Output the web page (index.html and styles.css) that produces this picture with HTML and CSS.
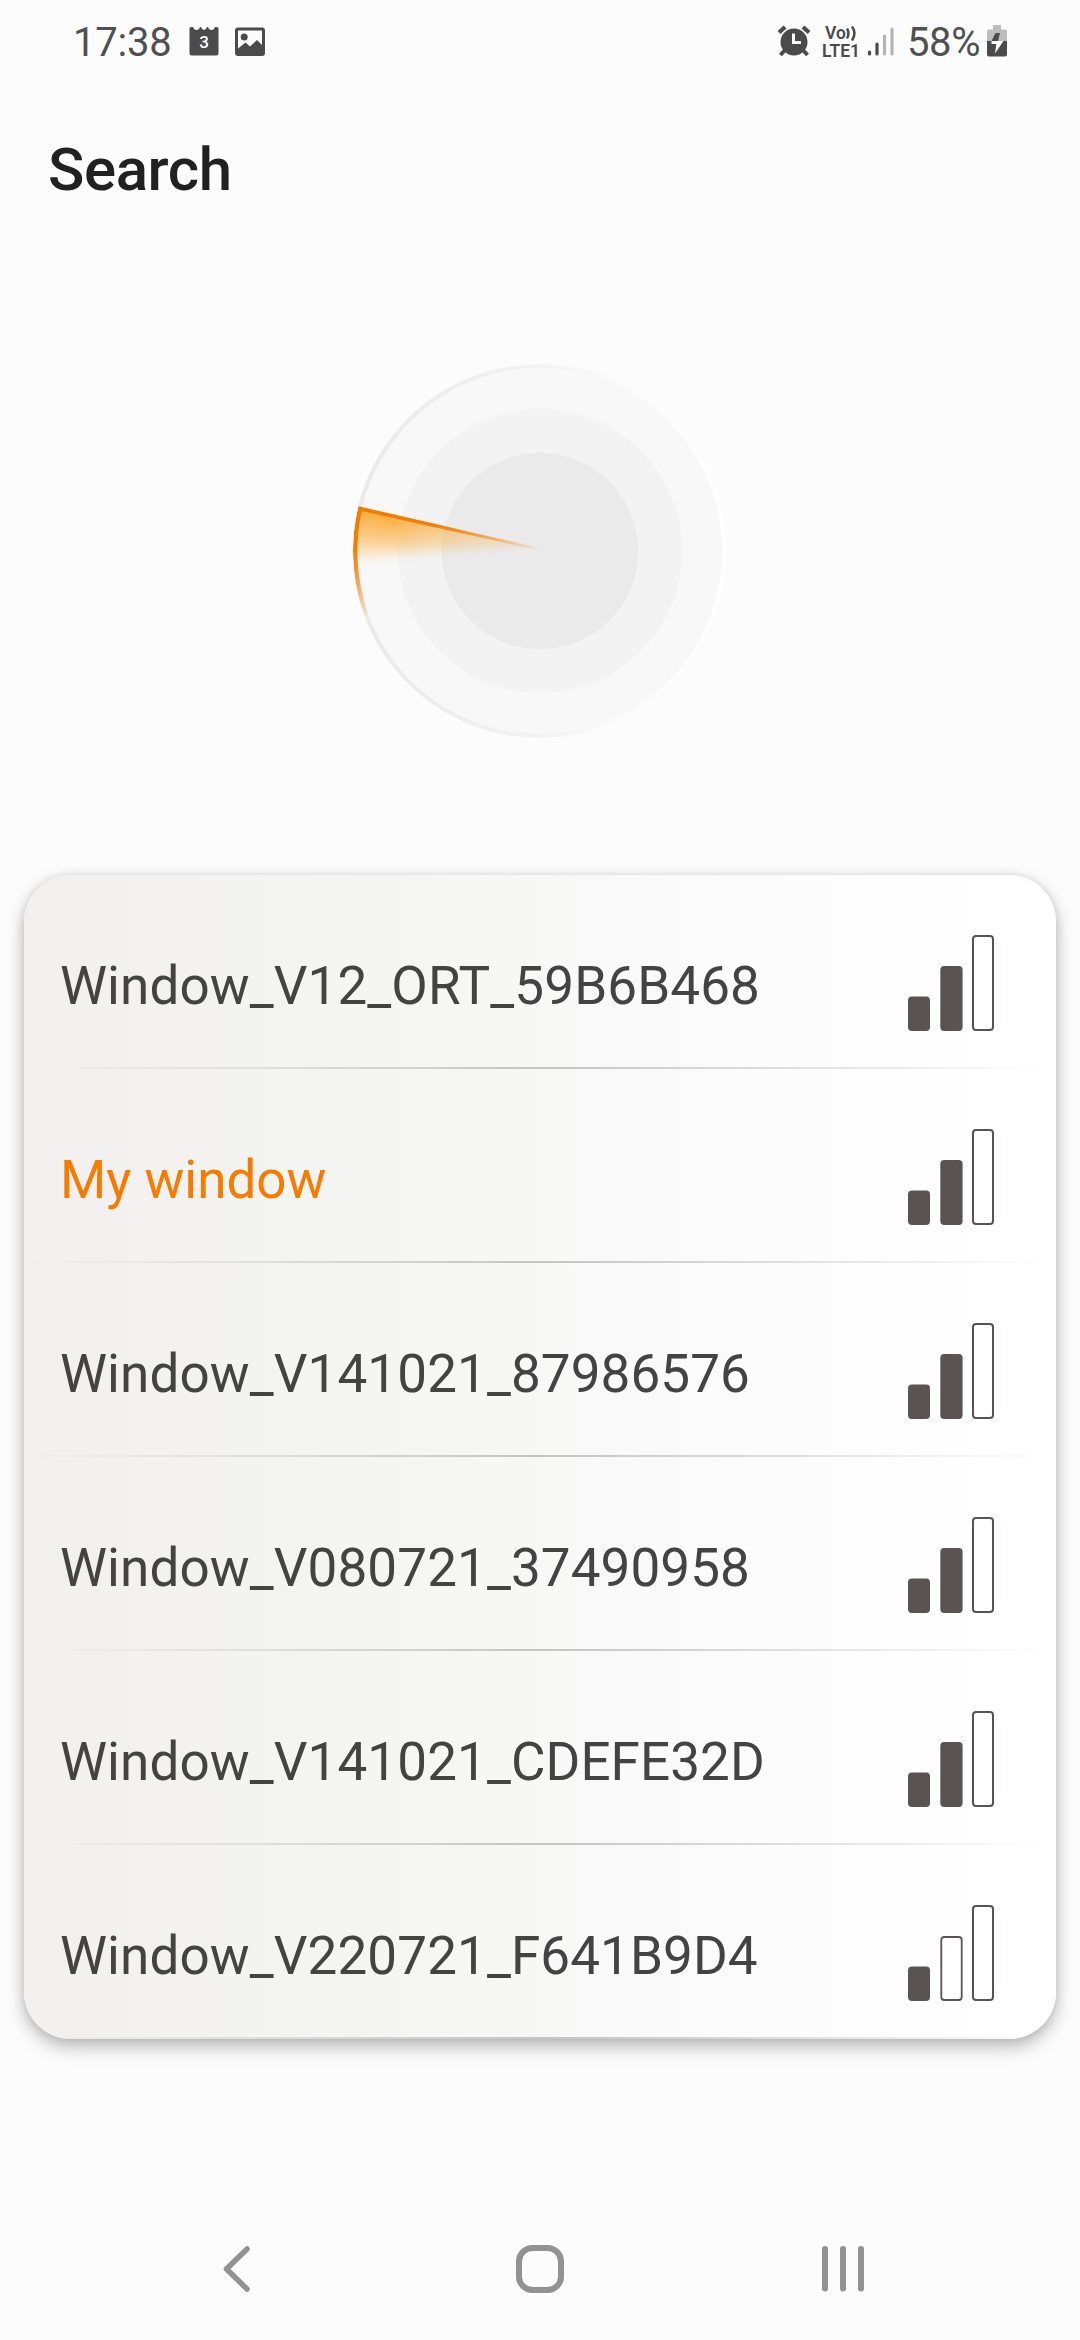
FILE: index.html
```
<!DOCTYPE html>
<html lang="en">
<head>
<meta charset="utf-8">
<title>Search</title>
<link rel="stylesheet" href="styles.css">
</head>
<body>
<svg class="defs" width="0" height="0">
  <defs>
    <g id="bar-low"><rect x="0" y="61.5" width="22" height="34.5" rx="4" fill="#595453"/></g>
    <g id="bar-mid"><rect x="32.3" y="31" width="22.3" height="65" rx="4" fill="#595453"/></g>
    <g id="bar-mid-off"><rect x="33.3" y="32" width="20.4" height="63" rx="3" fill="#fff" stroke="#595453" stroke-width="1.8"/></g>
    <g id="bar-high-off"><rect x="65" y="1" width="20" height="94" rx="3" fill="#fff" stroke="#595453" stroke-width="2"/></g>
    <symbol id="signal-2" viewBox="0 0 86 96"><use href="#bar-low"/><use href="#bar-mid"/><use href="#bar-high-off"/></symbol>
    <symbol id="signal-1" viewBox="0 0 86 96"><use href="#bar-low"/><use href="#bar-mid-off"/><use href="#bar-high-off"/></symbol>
  </defs>
</svg>
<div class="screen">
  <header class="status">
    <span class="clock">17:38</span>
    <svg class="calendar" width="30" height="30" viewBox="0 0 30 30">
      <path fill="#4b4b4b" d="M2 1H4Q5 4 7.500 4Q10 4 11 1H12Q13 4 15 4Q17 4 18 1H19Q20 4 22.500 4Q25 4 26 1H28Q29.500 1 29.500 3V27Q29.500 29.500 27 29.500H3Q.5 29.500 .5 27V3Q.5 1 2 1Z"/>
      <text x="15" y="22.300" text-anchor="middle" font-size="17" font-weight="500" fill="#fff">3</text>
    </svg>
    <svg class="picture" width="30" height="30" viewBox="0 0 30 30">
      <path fill="#4b4b4b" fill-rule="evenodd" d="M3 .5H27Q30 .5 30 3.500V26Q30 29 27 29H3Q0 29 0 26V3.500Q0 .5 3 .5ZM3 3.500V21.500L10.500 15.500L15 19.500L22 13L27 18V3.500Z"/>
      <circle cx="9.200" cy="10" r="3.500" fill="#4b4b4b"/>
    </svg>
    <div class="system">
      <svg class="alarm" width="34" height="32" viewBox="0 0 34 32">
        <path d="M2 7.500L8 2M32 7.500L26 2" stroke="#4b4b4b" stroke-width="4.200"/>
        <path d="M8 25L3.500 30M26 25L30.500 30" stroke="#4b4b4b" stroke-width="4"/>
        <circle cx="17" cy="17" r="13.500" fill="#4b4b4b"/>
        <path d="M16.500 8.500V17.500H24" fill="none" stroke="#fcfcfc" stroke-width="3"/>
      </svg>
      <svg class="volte" width="40" height="46" viewBox="0 -6 40 46">
        <g fill="#4b4b4b" font-weight="600">
          <text x="3" y="13.800" font-size="17.500" textLength="21">Vo</text>
          <text x="0" y="31.500" font-size="18" textLength="38" lengthAdjust="spacingAndGlyphs">LTE1</text>
        </g>
        <path d="M25 3.500Q28 8 25 13.500M30 1.500Q35 8 30 15.500" fill="none" stroke="#4b4b4b" stroke-width="2.500"/>
      </svg>
      <svg class="cell" width="28" height="30" viewBox="0 0 28 30">
        <g stroke-linecap="round" stroke-width="3.200">
          <path d="M2.500 25V27M10 17V27" stroke="#4b4b4b"/>
          <path d="M17.500 9V27M25 2V27" stroke="#b5b5b5"/>
        </g>
      </svg>
      <span class="percent">58%</span>
      <svg class="battery" width="20" height="32" viewBox="0 0 20 32">
        <path fill="#bdbdbd" d="M6 0H14V4.500H18Q20 4.500 20 6.500V16H0V6.500Q0 4.500 2 4.500H6Z"/>
        <path fill="#4b4b4b" d="M0 16H20V29.500Q20 31.500 18 31.500H2Q0 31.500 0 29.500Z"/>
        <path fill="#4b4b4b" d="M8.500 8H13L11 16H4.500Z"/>
        <path fill="#fcfcfc" d="M4.500 16H16.500L8 28.500L9.300 19H4.500Z"/>
      </svg>
    </div>
  </header>

  <h1 class="title">Search</h1>

  <div class="radar">
    <svg class="rings" width="374" height="374" viewBox="0 0 374 374">
      <defs>
        <linearGradient id="rim"><stop offset="0" stop-color="#e9e9e9"/><stop offset=".5" stop-color="#f3f3f3"/><stop offset=".72" stop-color="#fafafa"/><stop offset="1" stop-color="#fff"/></linearGradient>
      </defs>
      <circle cx="186.500" cy="187" r="184.800" fill="#f8f8f8" stroke="url(#rim)" stroke-width="4"/>
      <circle cx="187" cy="187" r="142.300" fill="#f3f3f3"/>
      <circle cx="187" cy="187" r="98.300" fill="#eaeaea"/>
    </svg>
    <div class="sweep"></div>
    <div class="sweep-rim"></div>
    <svg class="beam" width="374" height="374" viewBox="0 0 374 374">
      <defs>
        <linearGradient id="beam-fade" gradientUnits="userSpaceOnUse" x1="6" y1="143" x2="188" y2="185"><stop offset="0" stop-color="#f57c00"/><stop offset=".4" stop-color="#f57c00"/><stop offset="1" stop-color="#f57c00" stop-opacity="0"/></linearGradient>
      </defs>
      <path d="M5.500 142.300L188 184V187L5.500 146.300Z" fill="url(#beam-fade)"/>
    </svg>
  </div>

  <ul class="devices">
    <li class="device"><span class="name">Window_V12_ORT_59B6B468</span><svg class="signal"><use href="#signal-2"/></svg></li>
    <li class="device own"><span class="name">My window</span><svg class="signal"><use href="#signal-2"/></svg></li>
    <li class="device"><span class="name">Window_V141021_87986576</span><svg class="signal"><use href="#signal-2"/></svg></li>
    <li class="device"><span class="name">Window_V080721_37490958</span><svg class="signal"><use href="#signal-2"/></svg></li>
    <li class="device"><span class="name">Window_V141021_CDEFE32D</span><svg class="signal"><use href="#signal-2"/></svg></li>
    <li class="device"><span class="name">Window_V220721_F641B9D4</span><svg class="signal"><use href="#signal-1"/></svg></li>
  </ul>

  <nav class="nav">
    <svg width="48" height="48" viewBox="0 0 48 48"><path d="M34 4L13.500 24L34 44" fill="none" stroke="#929292" stroke-width="5.500" stroke-linecap="round" stroke-linejoin="round"/></svg>
    <svg width="48" height="48" viewBox="0 0 48 48"><rect x="3" y="3" width="42" height="42" rx="13.500" fill="none" stroke="#929292" stroke-width="6"/></svg>
    <svg width="48" height="48" viewBox="0 0 48 48"><path d="M6 4V43.500M24 4V43.500M42 4V43.500" fill="none" stroke="#929292" stroke-width="6" stroke-linecap="round"/></svg>
  </nav>
</div>
</body>
</html>
```
FILE: styles.css
```
* { box-sizing: border-box; }
body { margin: 0; background: #fcfcfc; font-family: Roboto, sans-serif; color: #434343; }
.defs { display: block; height: 0; }
.screen { width: 1080px; height: 2340px; display: flex; flex-direction: column; background: #fcfcfc; overflow: hidden; }

.status { height: 84px; padding: 0 73px; display: flex; align-items: flex-start; color: #505050; }
.clock, .percent { font-size: 40px; line-height: 48px; font-weight: 400; margin-top: 19px; }
.clock { width: 116px; letter-spacing: -0.2px; }
.calendar { margin-top: 26px; }
.picture { margin: 27px 0 0 16px; }
.system { margin-left: auto; display: flex; align-items: flex-start; }
.alarm { margin-top: 25px; }
.volte { margin: 19px 0 0 11px; }
.cell { margin: 27px 0 0 5px; }
.percent { width: 80px; margin-left: 12px; letter-spacing: -0.4px; }
.battery { margin-top: 25px; }

.title { margin: 50px 0 0 48px; font-size: 60px; line-height: 72px; font-weight: 500; letter-spacing: -0.4px; color: #212121; height: 72px; }

.radar { position: relative; width: 374px; height: 374px; margin: 158px 0 0 353px; }
.rings { display: block; }
.sweep, .sweep-rim, .beam { position: absolute; inset: 0; }
.sweep, .sweep-rim { border-radius: 50%; }
.sweep {
  background: conic-gradient(from 0deg at 188px 185px, transparent 264deg, rgba(251, 166, 40, .04) 266deg, rgba(251, 166, 40, .5) 273deg, rgba(251, 166, 40, .92) 283deg, transparent 283.1deg);
  -webkit-mask: radial-gradient(circle at 188px 185px, transparent 0, rgba(0, 0, 0, .5) 85px, #000 150px, #000 183px, transparent 184px);
  mask: radial-gradient(circle at 188px 185px, transparent 0, rgba(0, 0, 0, .5) 85px, #000 150px, #000 183px, transparent 184px);
}
.sweep-rim {
  background: conic-gradient(from 0deg at 187px 187px, transparent 249deg, rgba(245, 124, 0, .65) 261deg, #f57c00 271deg, #f57c00 283.7deg, transparent 283.8deg);
  -webkit-mask: radial-gradient(circle at 187px 187px, transparent 182px, #000 183px, #000 186.5px, transparent 187.2px);
  mask: radial-gradient(circle at 187px 187px, transparent 182px, #000 183px, #000 186.5px, transparent 187.2px);
}

.devices {
  list-style: none; width: 1032px; margin: 137px 0 0 24px; padding: 0; border-radius: 47px; overflow: hidden;
  background: linear-gradient(90deg, #f1f0ef 0%, #f5f5f4 35%, #fbfbfb 68%, #fdfdfd 80%, #fff 95%);
  box-shadow: 0 8px 18px rgba(0, 0, 0, .26), 0 0 10px rgba(0, 0, 0, .1);
}
.device {
  height: 194px; padding: 60px 62px 0 36px; display: flex; justify-content: space-between; align-items: flex-start;
  background: linear-gradient(90deg, rgba(190, 190, 190, 0), #c4c4c4 50%, rgba(190, 190, 190, 0)) bottom / 100% 2px no-repeat;
}
.name { font-size: 53px; line-height: 64px; margin-top: 19px; letter-spacing: 0.1px; white-space: nowrap; }
.own .name { color: #f57c00; letter-spacing: 0; }
.signal { width: 86px; height: 96px; }

.nav { margin-top: 206px; padding: 0 213px; display: flex; justify-content: space-between; }
```
